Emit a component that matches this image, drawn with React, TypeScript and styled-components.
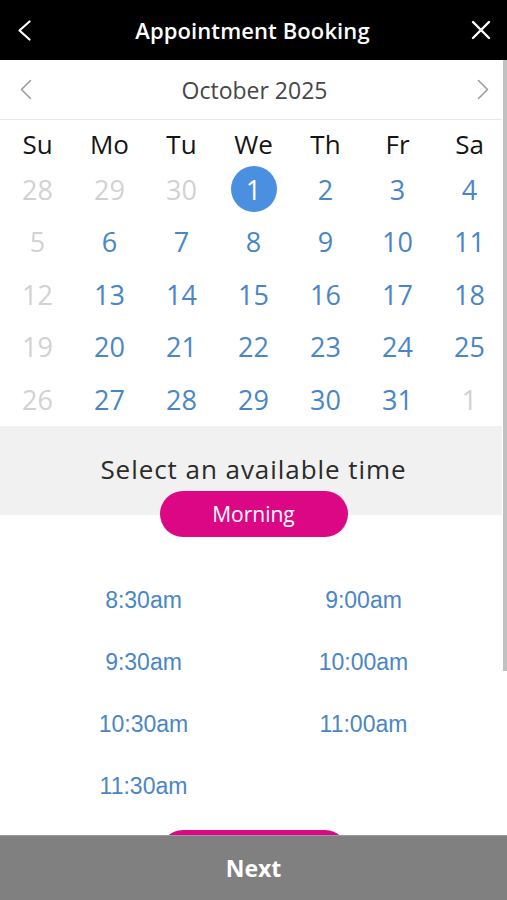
import React from "react";
import styled, { createGlobalStyle } from "styled-components";

const GlobalStyle = createGlobalStyle`
  html, body { margin: 0; padding: 0; background: #fff; }
  body { font-family: "Open Sans", "Liberation Sans", sans-serif; }
  * { box-sizing: border-box; }
`;

const Page = styled.div`
  width: 507px;
  height: 900px;
  display: flex;
  flex-direction: column;
  overflow: hidden;
  background: #fff;
`;

const TopBar = styled.header`
  flex: 0 0 60px;
  background: #000;
  display: flex;
  align-items: center;
  justify-content: space-between;
  padding: 0 14px 0 12px;
`;

const Title = styled.h1`
  margin: 0;
  color: #fff;
  font-family: "Open Sans", sans-serif;
  font-weight: 600;
  font-size: 22px;
  letter-spacing: 0.1px;
`;

const IconButton = styled.button`
  width: 24px;
  height: 24px;
  padding: 0;
  border: 0;
  background: transparent;
  display: flex;
  align-items: center;
  justify-content: center;
`;

const Body = styled.div`
  flex: 1 1 auto;
  min-height: 0;
  display: flex;
`;

const Scroll = styled.main`
  flex: 1 1 auto;
  min-width: 0;
  overflow: hidden;
`;

const ScrollRail = styled.div`
  flex: 0 0 5px;
  background: #fff;
  display: flex;
  justify-content: flex-end;
`;

const ScrollThumb = styled.div`
  width: 4px;
  height: 611px;
  background: #c1c1c1;
`;

const Content = styled.div`
  width: 507px;
`;

const MonthNav = styled.div`
  height: 60px;
  display: flex;
  align-items: center;
  justify-content: space-between;
  padding: 0 18px 0 20px;
  border-bottom: 1px solid #e9e9e9;
`;

const MonthLabel = styled.div`
  font-size: 23px;
  color: #474747;
  font-family: "Open Sans", sans-serif;
`;

const DayGrid = styled.div`
  display: grid;
  grid-template-columns: repeat(7, 72px);
  justify-content: center;
`;

const WeekdayCell = styled.div`
  height: 43px;
  padding-top: 6px;
  line-height: 37px;
  text-align: center;
  font-size: 26px;
  color: #151515;
`;

const DateCell = styled.div`
  height: 52.5px;
  display: flex;
  align-items: center;
  justify-content: center;
`;

const DateNum = styled.span<{ $tone: "muted" | "active" | "selected" }>`
  width: 46px;
  height: 46px;
  border-radius: 50%;
  display: flex;
  align-items: center;
  justify-content: center;
  font-size: 27px;
  line-height: 1;
  color: ${(p) => (p.$tone === "muted" ? "#d2d2d2" : p.$tone === "selected" ? "#fff" : "#4a86c5")};
  background: ${(p) => (p.$tone === "selected" ? "#4a8fe0" : "transparent")};
`;

const TimeHeader = styled.div`
  height: 89px;
  background: #f1f1f1;
  padding-top: 27px;
  text-align: center;
`;

const TimeHeading = styled.div`
  font-size: 26px;
  line-height: 32px;
  letter-spacing: 0.95px;
  color: #2b2b2b;
`;

const Pill = styled.button<{ $offset: number }>`
  display: flex;
  align-items: center;
  justify-content: center;
  width: 188px;
  height: 46px;
  margin: ${(p) => p.$offset}px auto 0;
  border: 0;
  border-radius: 23px;
  background: #dc0784;
  color: #fff;
  font-family: "Open Sans", sans-serif;
  font-size: 21px;
  position: relative;
`;

const SlotGrid = styled.div`
  display: grid;
  grid-template-columns: repeat(2, 220px);
  justify-content: center;
  margin-top: 33px;
`;

const Slot = styled.button`
  height: 62px;
  border: 0;
  background: transparent;
  font-family: "Liberation Sans", Arial, sans-serif;
  font-size: 23px;
  color: #4a86c5;
  padding: 0;
`;

const Footer = styled.footer`
  flex: 0 0 65px;
  background: #808080;
  border-top: 1px solid #9a9a9a;
  display: flex;
  align-items: center;
  justify-content: center;
`;

const NextLabel = styled.span`
  color: #fff;
  font-family: "Open Sans", sans-serif;
  font-weight: 700;
  font-size: 23px;
`;

const Chevron = ({ dir, color, w, h, sw }: { dir: "left" | "right"; color: string; w: number; h: number; sw: number }) => (
  <svg width={w} height={h} viewBox={`0 0 ${w} ${h}`} fill="none">
    {dir === "left" ? (
      <polyline points={`${w - 1.5},1.5 1.5,${h / 2} ${w - 1.5},${h - 1.5}`} stroke={color} strokeWidth={sw} strokeLinecap="round" strokeLinejoin="round" />
    ) : (
      <polyline points={`1.5,1.5 ${w - 1.5},${h / 2} 1.5,${h - 1.5}`} stroke={color} strokeWidth={sw} strokeLinecap="round" strokeLinejoin="round" />
    )}
  </svg>
);

const weekdays = ["Su", "Mo", "Tu", "We", "Th", "Fr", "Sa"];

type Day = { n: number; tone: "muted" | "active" | "selected" };

const weeks: Day[][] = [
  [28, 29, 30].map((n) => ({ n, tone: "muted" as const })).concat([{ n: 1, tone: "selected" }], [2, 3, 4].map((n) => ({ n, tone: "active" as const }))),
  [{ n: 5, tone: "muted" }, ...[6, 7, 8, 9, 10, 11].map((n) => ({ n, tone: "active" as const }))],
  [{ n: 12, tone: "muted" }, ...[13, 14, 15, 16, 17, 18].map((n) => ({ n, tone: "active" as const }))],
  [{ n: 19, tone: "muted" }, ...[20, 21, 22, 23, 24, 25].map((n) => ({ n, tone: "active" as const }))],
  [{ n: 26, tone: "muted" }, ...[27, 28, 29, 30, 31].map((n) => ({ n, tone: "active" as const })), { n: 1, tone: "muted" }],
];

const morning = ["8:30am", "9:00am", "9:30am", "10:00am", "10:30am", "11:00am", "11:30am"];

export default function App() {
  return (
    <>
      <GlobalStyle />
      <Page>
        <TopBar>
          <IconButton aria-label="Back">
            <Chevron dir="left" color="#fff" w={13} h={21} sw={2.2} />
          </IconButton>
          <Title>Appointment Booking</Title>
          <IconButton aria-label="Close">
            <svg width="20" height="20" viewBox="0 0 20 20" fill="none">
              <path d="M2 2 L18 18 M18 2 L2 18" stroke="#fff" strokeWidth="2.4" strokeLinecap="round" />
            </svg>
          </IconButton>
        </TopBar>
        <Body>
          <Scroll>
            <Content>
              <MonthNav>
                <Chevron dir="left" color="#9c9c9c" w={12} h={21} sw={1.6} />
                <MonthLabel>October 2025</MonthLabel>
                <Chevron dir="right" color="#9c9c9c" w={12} h={21} sw={1.6} />
              </MonthNav>
              <DayGrid>
                {weekdays.map((d) => (
                  <WeekdayCell key={d}>{d}</WeekdayCell>
                ))}
                {weeks.flat().map((d, i) => (
                  <DateCell key={i}>
                    <DateNum $tone={d.tone}>{d.n}</DateNum>
                  </DateCell>
                ))}
              </DayGrid>
              <TimeHeader>
                <TimeHeading>Select an available time</TimeHeading>
              </TimeHeader>
              <Pill $offset={-24}>Morning</Pill>
              <SlotGrid>
                {morning.map((t) => (
                  <Slot key={t}>{t}</Slot>
                ))}
              </SlotGrid>
              <Pill $offset={12} aria-label="Afternoon" />
            </Content>
          </Scroll>
          <ScrollRail>
            <ScrollThumb />
          </ScrollRail>
        </Body>
        <Footer>
          <NextLabel>Next</NextLabel>
        </Footer>
      </Page>
    </>
  );
}
